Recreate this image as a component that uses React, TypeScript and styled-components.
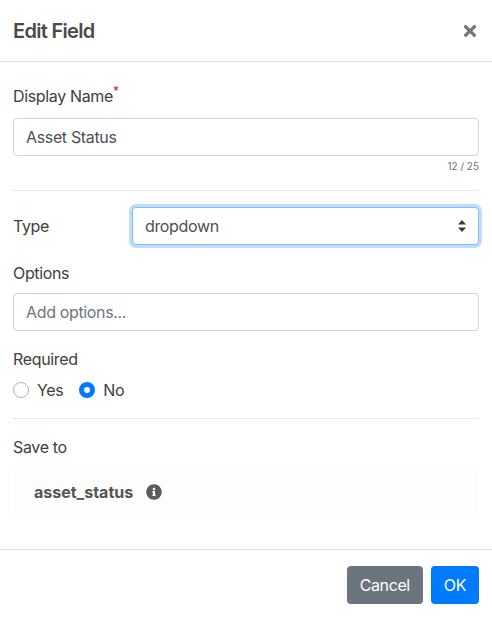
import { createGlobalStyle, styled } from "styled-components";
import { FaInfoCircle, FaTimes } from "react-icons/fa";

const GlobalStyle = createGlobalStyle`
  html, body {
    margin: 0;
    padding: 0;
    background: #fff;
  }
  body {
    font-family: Inter, "Liberation Sans", sans-serif;
    font-size: 16px;
    line-height: 24px;
    letter-spacing: -0.35px;
    color: #404040;
  }
  * {
    box-sizing: border-box;
  }
`;

const App = () => {
  return (
    <>
      <GlobalStyle />
      <Modal>
        <Header>
          <Title>Edit Field</Title>
          <CloseButton aria-label="Close">
            <FaTimes />
          </CloseButton>
        </Header>

        <Body>
          <Label $bottom={10}>
            Display Name<Star>*</Star>
          </Label>
          <TextInput defaultValue="Asset Status" />
          <Counter>12 / 25</Counter>
          <Divider $top={17} />

          <TypeRow>
            <TypeLabel>Type</TypeLabel>
            <SelectWrap>
              <Select defaultValue="dropdown">
                <option value="dropdown">dropdown</option>
              </Select>
              <SelectArrow viewBox="0 0 8 12">
                <path d="M4 0 L8 4.6 H0 Z M4 12 L0 7.4 H8 Z" fill="#343a40" />
              </SelectArrow>
            </SelectWrap>
          </TypeRow>

          <Label $top={16}>Options</Label>
          <TextInput placeholder="Add options..." />

          <Label $top={16}>Required</Label>
          <RadioGroup>
            <RadioOption>
              <Radio />
              Yes
            </RadioOption>
            <RadioOption>
              <Radio $checked />
              No
            </RadioOption>
          </RadioGroup>
          <Divider $top={16} />

          <Label $top={16}>Save to</Label>
          <SaveBox>
            <SaveName>asset_status</SaveName>
            <InfoIcon>
              <FaInfoCircle />
            </InfoIcon>
          </SaveBox>
        </Body>

        <Footer>
          <Button $variant="secondary">Cancel</Button>
          <Button $variant="primary">OK</Button>
        </Footer>
      </Modal>
    </>
  );
};

export default App;

const Modal = styled.div`
  width: 492px;
  height: 617px;
  display: flex;
  flex-direction: column;
  background: #fff;
`;

const Header = styled.div`
  height: 62px;
  flex-shrink: 0;
  padding: 0 13px;
  display: flex;
  align-items: center;
  justify-content: space-between;
  border-bottom: 1px solid #dee2e6;
`;

const Title = styled.h5`
  margin: 0;
  font-size: 20px;
  font-weight: 600;
  letter-spacing: -0.7px;
  line-height: 60px;
  color: #4a4a4a;
`;

const CloseButton = styled.button`
  padding: 0;
  border: 0;
  background: none;
  color: #777;
  display: flex;
  font-size: 18px;
  cursor: pointer;
`;

const Body = styled.div`
  flex: 1;
  padding: 22px 13px 0;
`;

const Label = styled.div<{ $top?: number; $bottom?: number }>`
  margin-top: ${(p) => p.$top ?? 0}px;
  margin-bottom: ${(p) => p.$bottom ?? 8}px;
  height: 24px;
  line-height: 24px;
`;

const Star = styled.sup`
  color: #e8112d;
  font-size: 12px;
  line-height: 0;
  position: relative;
  top: -1px;
`;

const TextInput = styled.input`
  display: block;
  width: 100%;
  height: 38px;
  padding: 6px 12px;
  border: 1px solid #ced4da;
  border-radius: 4px;
  background: #fff;
  font: inherit;
  letter-spacing: inherit;
  color: #495057;
  outline: none;

  &::placeholder {
    color: #6c757d;
    opacity: 1;
  }
`;

const Counter = styled.div`
  margin-top: 3px;
  font-size: 10px;
  line-height: 14px;
  letter-spacing: 0;
  text-align: right;
  color: #6c757d;
`;

const Divider = styled.hr<{ $top: number }>`
  margin: ${(p) => p.$top}px 0 0;
  border: 0;
  border-top: 1px solid #e6e8eb;
`;

const TypeRow = styled.div`
  margin-top: 16px;
  display: flex;
  align-items: center;
`;

const TypeLabel = styled.div`
  width: 119px;
`;

const SelectWrap = styled.div`
  flex: 1;
  position: relative;
`;

const Select = styled.select`
  display: block;
  width: 100%;
  height: 38px;
  padding: 6px 28px 6px 12px;
  appearance: none;
  border: 1px solid #80bdff;
  border-radius: 4px;
  background: #fff;
  box-shadow: 0 0 0 3px rgba(0, 123, 255, 0.25);
  font: inherit;
  letter-spacing: inherit;
  color: #495057;
  outline: none;
`;

const SelectArrow = styled.svg`
  position: absolute;
  top: 13px;
  right: 13px;
  width: 8px;
  height: 12px;
  pointer-events: none;
`;

const RadioGroup = styled.div`
  margin-top: -1px;
  display: flex;
  gap: 16px;
`;

const RadioOption = styled.label`
  display: flex;
  align-items: center;
  gap: 8px;
  height: 24px;
`;

const Radio = styled.span<{ $checked?: boolean }>`
  width: 16px;
  height: 16px;
  border-radius: 50%;
  background: #fff;
  border: ${(p) => (p.$checked ? "5px solid #007bff" : "1px solid #adb5bd")};
`;

const SaveBox = styled.div`
  margin-top: 1px;
  height: 49px;
  padding: 0 21px;
  display: flex;
  align-items: center;
  gap: 13px;
  border-radius: 4px;
  background: #fdfdfd;
`;

const SaveName = styled.span`
  font-size: 16px;
  font-weight: 700;
  letter-spacing: 0;
  color: #555;
`;

const InfoIcon = styled.span`
  display: flex;
  font-size: 16px;
  color: #5c5c5c;
`;

const Footer = styled.div`
  height: 68px;
  flex-shrink: 0;
  padding: 16px 13px 0;
  display: flex;
  justify-content: flex-end;
  gap: 8px;
  border-top: 1px solid #dee2e6;
`;

const Button = styled.button<{ $variant: "primary" | "secondary" }>`
  height: 38px;
  min-width: 48px;
  padding: 0 13px;
  border: 0;
  border-radius: 4px;
  font: inherit;
  letter-spacing: -0.4px;
  color: #fff;
  background: ${(p) => (p.$variant === "primary" ? "#007bff" : "#6c757d")};
  cursor: pointer;
`;
